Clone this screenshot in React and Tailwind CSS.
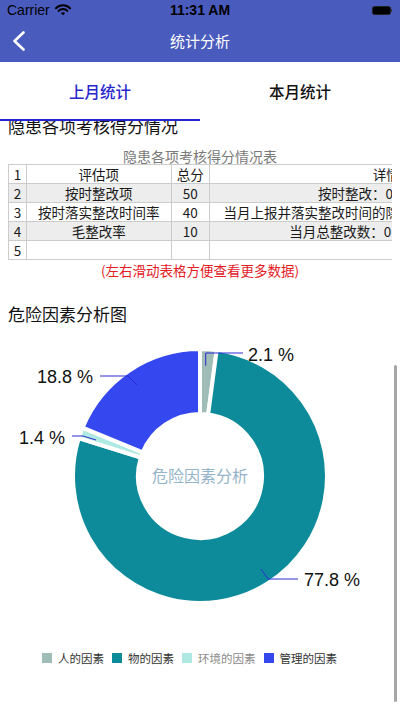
import React from "react";

const CX = 200;
const CY = 150;
const R = 127;
const r = 62;

function pt(a, rad) {
  const t = (a * Math.PI) / 180;
  return [CX + rad * Math.sin(t), CY - rad * Math.cos(t)];
}

function arc(a0, a1) {
  const large = a1 - a0 > 180 ? 1 : 0;
  const [x0, y0] = pt(a0, R);
  const [x1, y1] = pt(a1, R);
  const [x2, y2] = pt(a1, r);
  const [x3, y3] = pt(a0, r);
  return `M${x0} ${y0} A${R} ${R} 0 ${large} 1 ${x1} ${y1} L${x2} ${y2} A${r} ${r} 0 ${large} 0 ${x3} ${y3} Z`;
}

const data = [
  { name: "人的因素", v: 2.1, color: "#9fbcb6", text: "text-[#333]" },
  { name: "物的因素", v: 77.8, color: "#0d8b9a", text: "text-[#333]" },
  { name: "环境的因素", v: 1.4, color: "#aeeae1", text: "text-[#8a8a8a]" },
  { name: "管理的因素", v: 18.8, color: "#3548ef", text: "text-[#333]" },
];

function Donut() {
  const total = data.reduce((s, d) => s + d.v, 0);
  let acc = 0;
  const slices = data.map((d) => {
    const a0 = (acc / total) * 360;
    acc += d.v;
    const a1 = (acc / total) * 360;
    return { ...d, a0, a1 };
  });
  const lc = "#2b2bd6";
  return (
    <svg width="400" height="300" viewBox="0 0 400 300" className="block">
      {slices.map((s) => (
        <path key={s.name} d={arc(s.a0, s.a1)} fill={s.color} stroke="#ffffff" strokeWidth="4" strokeLinejoin="miter" />
      ))}
      <text x="200" y="156" textAnchor="middle" fill="#95b4c9" fontSize="16" className="font-['Noto_Sans_CJK_SC',sans-serif]">
        危险因素分析
      </text>
      <g fill="none" stroke={lc} strokeWidth="1">
        <polyline points="205.7,39.7 205.7,27 243,27" />
        <polyline points="100,50 128,50 137,59" />
        <polyline points="72,110 83,110 96,114" />
        <polyline points="261,243 268,253 298,253" />
      </g>
      <g fill="#111" fontSize="18" className="font-['Liberation_Sans',sans-serif]">
        <text x="248" y="34.5">2.1 %</text>
        <text x="93" y="56.5" textAnchor="end">18.8 %</text>
        <text x="65" y="117.5" textAnchor="end">1.4 %</text>
        <text x="304" y="259.5">77.8 %</text>
      </g>
    </svg>
  );
}

const rows = [
  ["1", "评估项", "总分", "详情", "bg-white"],
  ["2", "按时整改项", "50", "按时整改：0，逾期：0", "bg-[#ededed]"],
  ["3", "按时落实整改时间率", "40", "当月上报并落实整改时间的隐患数：0，隐患总数：0项", "bg-white"],
  ["4", "毛整改率", "10", "当月总整改数：0|按时整改数：0", "bg-[#ededed]"],
  ["5", "", "", "", "bg-white"],
];

function Wifi() {
  return (
    <svg width="16" height="12" viewBox="0 0 16 12">
      <path d="M1 4.2 A10 10 0 0 1 15 4.2" fill="none" stroke="#000" strokeWidth="2" strokeLinecap="round" />
      <path d="M3.6 6.9 A6.3 6.3 0 0 1 12.4 6.9" fill="none" stroke="#000" strokeWidth="2" strokeLinecap="round" />
      <path d="M8 11.2 L5.9 9.2 A3 3 0 0 1 10.1 9.2 Z" fill="#000" />
    </svg>
  );
}

export default function App() {
  return (
    <div className="relative w-[400px] h-[710px] overflow-hidden bg-white font-['Noto_Sans_CJK_SC',sans-serif]">
      {/* header */}
      <div className="bg-[#4a5bbe]">
        <div className="h-[20px] flex items-center justify-between px-[7px] font-['Liberation_Sans',sans-serif] text-[14px] text-black">
          <div className="flex items-center gap-[5px] w-[100px]">
            <span>Carrier</span>
            <Wifi />
          </div>
          <span className="font-semibold">11:31 AM</span>
          <div className="w-[100px] flex justify-end items-center pr-[1px]">
            <div className="w-[19px] h-[9px] rounded-[2.5px] bg-black border border-[#222]" />
            <div className="w-[1.5px] h-[3px] bg-[#333] rounded-r-sm" />
          </div>
        </div>
        <div className="h-[42px] relative flex items-center justify-center">
          <svg className="absolute left-[12px] top-[11px]" width="14" height="20" viewBox="0 0 14 20">
            <polyline points="11.5,1.5 2.5,10 11.5,18.5" fill="none" stroke="#fff" strokeWidth="2.6" strokeLinecap="round" strokeLinejoin="round" />
          </svg>
          <span className="text-white text-[15px] leading-[20px]">统计分析</span>
        </div>
      </div>

      {/* tabs */}
      <div className="relative h-[59px] flex bg-white">
        <div className="w-1/2 flex items-center justify-center text-[15.5px] font-medium text-[#2727cc]">上月统计</div>
        <div className="w-1/2 flex items-center justify-center text-[15.5px] font-medium text-[#111]">本月统计</div>
        <div className="absolute left-0 bottom-0 w-1/2 h-[2px] bg-[#2424d2]" />
      </div>

      {/* content */}
      <div className="overflow-hidden h-[589px]">
        <div className="-mt-[7px] pl-2 text-[17px] leading-[24px] text-[#111]">隐患各项考核得分情况</div>
        <div className="mt-[10px] text-center text-[14px] leading-[16px] text-[#7a7a7a]">隐患各项考核得分情况表</div>
        <div className="mx-2 overflow-hidden">
          <div className="w-[556px] border-t border-l border-[#cccccc] text-[13.5px] leading-[18px] text-[#1a1a1a]">
            {rows.map((row) => (
              <div key={row[0]} className={`flex h-[19px] border-b border-[#cccccc] ${row[4]}`}>
                <div className="w-[18px] border-r border-[#cccccc] flex items-center justify-center">{row[0]}</div>
                <div className="w-[145px] border-r border-[#cccccc] flex items-center justify-center whitespace-nowrap">{row[1]}</div>
                <div className="w-[38px] border-r border-[#cccccc] flex items-center justify-center">{row[2]}</div>
                <div className="w-[355px] border-r border-[#cccccc] flex items-center justify-center whitespace-nowrap">{row[3]}</div>
              </div>
            ))}
          </div>
        </div>
        <div className="text-center text-[13.5px] leading-[20px] text-[#e3201f]">(左右滑动表格方便查看更多数据)</div>

        <div className="mt-[22px] pl-2 text-[17px] leading-[24px] text-[#111]">危险因素分析图</div>
        <Donut />
        <div className="mt-[22px] h-[20px] pl-[42px] flex items-center gap-[8px] text-[11.5px] leading-[20px]">
          {data.map((d) => (
            <div key={d.name} className="flex items-center gap-[6px]">
              <div className="w-[10px] h-[10px]" style={{ backgroundColor: d.color }} />
              <span className={d.text}>{d.name}</span>
            </div>
          ))}
        </div>
      </div>

      {/* scroll indicator */}
      <div className="absolute right-[3px] top-[365px] w-[3px] h-[337px] rounded-full bg-[#a6a6a6]" />
    </div>
  );
}
